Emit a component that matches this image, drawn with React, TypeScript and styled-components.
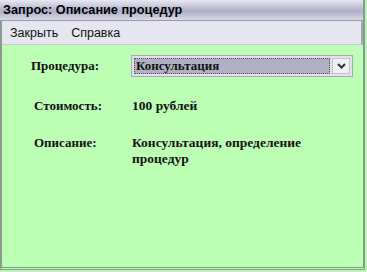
import React from "react";
import styled, { createGlobalStyle } from "styled-components";

const Global = createGlobalStyle`
  html, body { margin: 0; padding: 0; background: #c4f0c0; }
  body { width: 367px; height: 272px; overflow: hidden; }
`;

const Window = styled.div`
  width: 365px;
  height: 270px;
  box-sizing: border-box;
  display: flex;
  flex-direction: column;
  background: #bcffb4;
  border-right: 2px solid #7f9f86;
  border-bottom: 3px double #809a84;
  border-left: 2px solid #8a9c8e;
`;

const TitleBar = styled.div`
  height: 20px;
  flex: none;
  margin-left: -2px;
  display: flex;
  align-items: center;
  padding-left: 3px;
  background: linear-gradient(#e8e8f2 0%, #c8c8dc 30%, #aeaecc 55%, #c4c4da 80%, #dcdce8 100%);
  border-bottom: 1px solid #9a9aa8;
  font-family: "Liberation Sans", Arial, sans-serif;
  font-weight: bold;
  font-size: 12.7px;
  color: #000;
`;

const MenuBar = styled.div`
  height: 23px;
  flex: none;
  display: flex;
  align-items: center;
  gap: 13px;
  padding-left: 8px;
  background: #e6e6f0;
  border-right: 2px solid #a8a8b0;
  border-bottom: 1px solid #c8c8d0;
  font-family: "Liberation Sans", Arial, sans-serif;
  font-size: 12.5px;
  color: #111;
`;

const MenuItem = styled.span``;

const Content = styled.div`
  flex: 1;
  display: grid;
  grid-template-columns: 100px 222px;
  row-gap: 21px;
  align-content: start;
  padding: 10px 0 0 29px;
  font-family: "Liberation Serif", "Times New Roman", serif;
  font-weight: bold;
  font-size: 13px;
  color: #111;
`;

const Label = styled.div<{ $offset?: number }>`
  padding-left: ${(p) => p.$offset ?? 0}px;
  line-height: 16px;
  align-self: ${(p) => (p.$offset === undefined ? "center" : "start")};
`;

const Value = styled.div`
  line-height: 16px;
  padding-left: 1px;
  font-size: 13.5px;
`;

const Combo = styled.div`
  height: 22px;
  box-sizing: border-box;
  display: flex;
  align-items: stretch;
  padding: 2px;
  background: #e2e2ea;
  border: 1px solid #a8a8b8;
`;

const ComboField = styled.div`
  flex: 1;
  display: flex;
  align-items: center;
  padding-left: 2px;
  background: #b0b0c6;
  outline: 1px dotted #555;
  outline-offset: -1px;
  margin-right: 2px;
`;

const ComboButton = styled.div`
  width: 18px;
  display: flex;
  align-items: center;
  justify-content: center;
  background: #f0f0f4;
  border: 1px solid #c4c4d0;
  box-sizing: border-box;
`;

export default function App() {
  return (
    <>
      <Global />
      <Window>
        <TitleBar>Запрос: Описание процедур</TitleBar>
        <MenuBar>
          <MenuItem>Закрыть</MenuItem>
          <MenuItem>Справка</MenuItem>
        </MenuBar>
        <Content>
          <Label>Процедура:</Label>
          <Combo>
            <ComboField>Консультация</ComboField>
            <ComboButton>
              <svg width="9" height="6" viewBox="0 0 9 6">
                <path d="M1 1 L4.5 4.5 L8 1" stroke="#333" strokeWidth="2" fill="none" />
              </svg>
            </ComboButton>
          </Combo>
          <Label $offset={3}>Стоимость:</Label>
          <Value>100 рублей</Value>
          <Label $offset={3}>Описание:</Label>
          <Value>
            Консультация, определение
            <br />
            процедур
          </Value>
        </Content>
      </Window>
    </>
  );
}
